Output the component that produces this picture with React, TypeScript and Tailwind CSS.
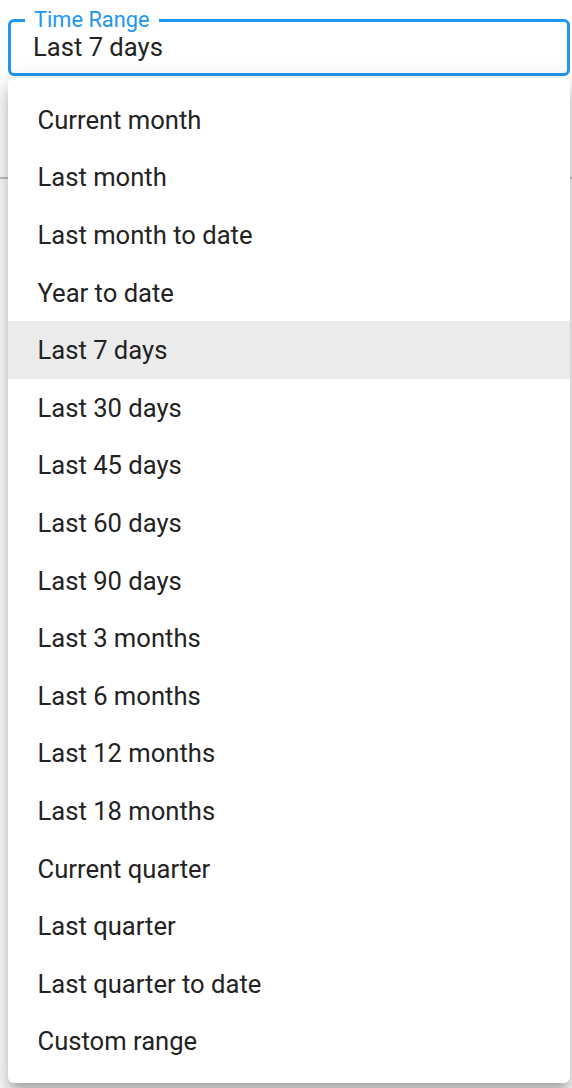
import React from "react";

const items = [
  "Current month",
  "Last month",
  "Last month to date",
  "Year to date",
  "Last 7 days",
  "Last 30 days",
  "Last 45 days",
  "Last 60 days",
  "Last 90 days",
  "Last 3 months",
  "Last 6 months",
  "Last 12 months",
  "Last 18 months",
  "Current quarter",
  "Last quarter",
  "Last quarter to date",
  "Custom range",
];

export default function App() {
  return (
    <div
      className="relative h-[1088px] w-[572px] overflow-hidden bg-white text-[#232323]"
      style={{ fontFamily: "Roboto, 'Liberation Sans', sans-serif" }}
    >
      <div className="pl-[8px] pr-[2px] pt-[19px]">
        <div className="relative h-[57px] rounded-[6px] border-[3px] border-[#2196f3] pl-[22px] pt-[10px]">
          <span className="absolute left-[14px] top-[-17px] bg-white px-[9px] text-[21.8px] leading-[30px] text-[#2196f3]">
            Time Range
          </span>
          <div className="text-[25.6px] leading-[30px]">Last 7 days</div>
        </div>
      </div>
      <div className="mt-[101px] h-[2px] bg-[#c4c4c4]" />

      <div className="absolute left-[8px] right-[2px] top-[78px] rounded-[6px] bg-white py-[13px] shadow-[0px_8px_8px_-5px_rgba(0,0,0,0.2),0px_13px_16px_2px_rgba(0,0,0,0.14),0px_5px_22px_4px_rgba(0,0,0,0.12)]">
        {items.map((it) => (
          <div
            key={it}
            className={
              "flex h-[57.6px] items-center pl-[29.5px] text-[25.6px] leading-[30px] " +
              (it === "Last 7 days" ? "bg-[#ebebeb]" : "")
            }
          >
            {it}
          </div>
        ))}
      </div>
    </div>
  );
}
